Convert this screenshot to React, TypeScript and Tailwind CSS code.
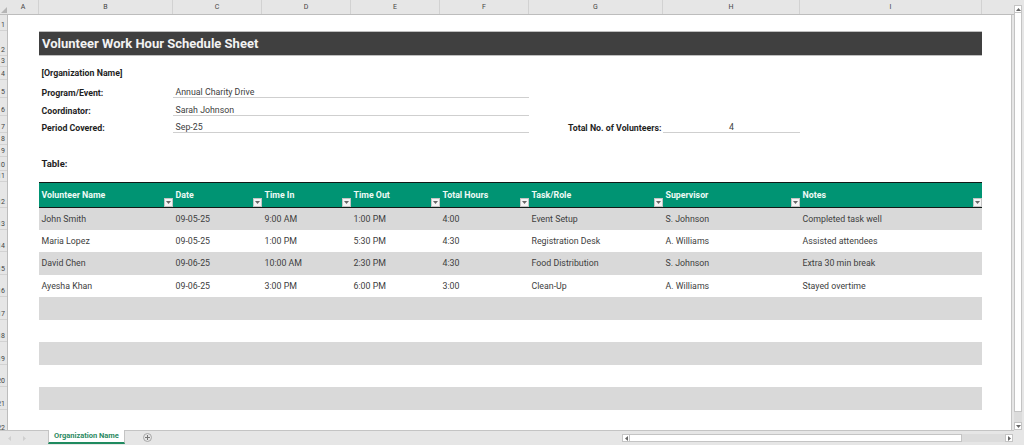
const COLS = "grid grid-cols-[31px_134px_89px_89px_89px_89px_134px_137px_182px_30px]";

const ROW_NUMS: [number, string][] = [
  [1, "h-[16px]"], [2, "h-[25px]"], [3, "h-[11px]"], [4, "h-[13px]"], [5, "h-[18px]"], [6, "h-[18px]"],
  [7, "h-[17px]"], [8, "h-[12px]"], [9, "h-[12px]"], [10, "h-[14px]"], [11, "h-[11px]"], [12, "h-[26px]"],
  [13, "h-[22px]"], [14, "h-[22px]"], [15, "h-[23px]"], [16, "h-[22px]"], [17, "h-[23px]"], [18, "h-[22px]"],
  [19, "h-[23px]"], [20, "h-[22px]"], [21, "h-[23px]"], [22, "h-[24px]"],
];

const COL_HEADS = ["A", "B", "C", "D", "E", "F", "G", "H", "I"];
const HEADERS = ["Volunteer Name", "Date", "Time In", "Time Out", "Total Hours", "Task/Role", "Supervisor", "Notes"];

const DATA: { cells: string[]; height: string; band: boolean }[] = [
  { cells: ["John Smith", "09-05-25", "9:00 AM", "1:00 PM", "4:00", "Event Setup", "S. Johnson", "Completed task well"], height: "h-[22px]", band: true },
  { cells: ["Maria Lopez", "09-05-25", "1:00 PM", "5:30 PM", "4:30", "Registration Desk", "A. Williams", "Assisted attendees"], height: "h-[22px]", band: false },
  { cells: ["David Chen", "09-06-25", "10:00 AM", "2:30 PM", "4:30", "Food Distribution", "S. Johnson", "Extra 30 min break"], height: "h-[23px]", band: true },
  { cells: ["Ayesha Khan", "09-06-25", "3:00 PM", "6:00 PM", "3:00", "Clean-Up", "A. Williams", "Stayed overtime"], height: "h-[22px]", band: false },
  { cells: ["", "", "", "", "", "", "", ""], height: "h-[23px]", band: true },
  { cells: ["", "", "", "", "", "", "", ""], height: "h-[22px]", band: false },
  { cells: ["", "", "", "", "", "", "", ""], height: "h-[23px]", band: true },
  { cells: ["", "", "", "", "", "", "", ""], height: "h-[22px]", band: false },
  { cells: ["", "", "", "", "", "", "", ""], height: "h-[23px]", band: true },
];

function FilterButton() {
  return (
    <span className="absolute right-0 bottom-0 flex h-[9px] w-[9px] items-center justify-center border border-[#c4c4c4] bg-[#f4f4f4]">
      <svg width="5" height="3" viewBox="0 0 5 3"><path d="M0 0h5L2.5 3z" fill="#666" /></svg>
    </span>
  );
}

function InfoRow({ height, label, value }: { height: string; label: string; value: string }) {
  return (
    <div className={`${COLS} ${height}`}>
      <div />
      <div className="flex items-end pl-[2.5px] font-bold text-[#1f1f1f]">{label}</div>
      <div className="col-span-4 flex items-end border-b border-[#cfcfcf] pl-[2.5px] text-[#404040]">{value}</div>
    </div>
  );
}

export default function App() {
  return (
    <div className="flex h-[445px] w-[1024px] overflow-hidden bg-[#e6e6e6] font-['Roboto',sans-serif] text-[9px] leading-none">
      <div className="flex w-[1014px] shrink-0 flex-col">
        {/* column letters */}
        <div className="flex h-[15px] shrink-0 border-b border-[#bdbdbd]">
          <div className="relative w-[8px]">
            <svg className="absolute right-[1px] bottom-[1px]" width="6" height="6" viewBox="0 0 6 6"><path d="M6 0v6H0z" fill="#b5b5b5" /></svg>
          </div>
          <div className={COLS}>
            {COL_HEADS.map((c) => (
              <div key={c} className="flex items-center justify-center border-r border-[#d2d2d2] text-[7px] text-[#444]">{c}</div>
            ))}
          </div>
        </div>

        <div className="flex h-[415px] shrink-0 overflow-hidden">
          {/* row numbers */}
          <div className="flex w-[8px] shrink-0 flex-col overflow-hidden border-r border-[#bdbdbd]">
            {ROW_NUMS.map(([n, h]) => (
              <div key={n} className={`${h} flex shrink-0 items-end justify-end overflow-hidden border-b border-[#d2d2d2] pr-[2px] pb-[1px] text-[7px] text-[#444]`}>
                {n}
              </div>
            ))}
          </div>

          {/* sheet */}
          <div className="flex w-[1004px] shrink-0 flex-col overflow-hidden border-r border-[#c4c4c4] bg-white text-[8.8px]">
            <div className="h-[16px] shrink-0" />
            <div className={`${COLS} h-[25px] shrink-0`}>
              <div />
              <div className="col-span-8 flex items-center border-y border-[#bfbfbf] bg-[#404040] pl-[3px] text-[13px] font-bold text-[#f2f2f2]">
                Volunteer Work Hour Schedule Sheet
              </div>
            </div>
            <div className="h-[11px] shrink-0" />
            <div className={`${COLS} h-[13px] shrink-0`}>
              <div />
              <div className="flex items-center whitespace-nowrap pl-[2.5px] font-bold text-[#1f1f1f]">[Organization Name]</div>
            </div>
            <InfoRow height="h-[18px] shrink-0" label="Program/Event:" value="Annual Charity Drive" />
            <InfoRow height="h-[18px] shrink-0" label="Coordinator:" value="Sarah Johnson" />
            <div className={`${COLS} h-[17px] shrink-0`}>
              <div />
              <div className="flex items-end pl-[2.5px] font-bold text-[#1f1f1f]">Period Covered:</div>
              <div className="col-span-4 flex items-end border-b border-[#cfcfcf] pl-[2.5px] text-[#404040]">Sep-25</div>
              <div className="flex items-end justify-end pr-[1.5px] font-bold text-[#1f1f1f]">Total No. of Volunteers:</div>
              <div className="flex items-end justify-center border-b border-[#cfcfcf] text-[#404040]">4</div>
            </div>
            <div className="h-[24px] shrink-0" />
            <div className={`${COLS} h-[14px] shrink-0`}>
              <div />
              <div className="flex items-center pl-[2.5px] text-[9.5px] font-bold text-[#1f1f1f]">Table:</div>
            </div>
            <div className="h-[11px] shrink-0" />

            {/* table header */}
            <div className={`${COLS} h-[26px] shrink-0`}>
              <div />
              {HEADERS.map((h) => (
                <div key={h} className="relative flex items-center border-y border-y-[#111a17] bg-[#009473] pl-[2.5px] font-bold text-[#eefaf6]">
                  {h}
                  <FilterButton />
                </div>
              ))}
            </div>

            {/* table rows */}
            {DATA.map((row, i) => (
              <div key={i} className={`${COLS} ${row.height} shrink-0`}>
                <div />
                {row.cells.map((c, j) => (
                  <div key={j} className={`flex items-center pl-[2.5px] whitespace-nowrap text-[#404040] ${row.band ? "bg-[#d9d9d9]" : ""}`}>
                    {c}
                  </div>
                ))}
              </div>
            ))}
          </div>
        </div>

        {/* tab bar */}
        <div className="flex h-[15px] shrink-0 items-start border-t border-[#c4c4c4]">
          <div className="flex w-[48px] items-center gap-[12px] pl-[8px] pt-[5px]">
            <svg width="3" height="5" viewBox="0 0 3 5"><path d="M3 0v5L0 2.5z" fill="#cfcfcf" /></svg>
            <svg width="3" height="5" viewBox="0 0 3 5"><path d="M0 0v5l3-2.5z" fill="#cfcfcf" /></svg>
          </div>
          <div className="-mt-[1px] flex h-[14px] w-[77px] items-center justify-center border-x border-b-2 border-x-[#c4c4c4] border-b-[#1f8a5f] bg-white text-[7.5px] font-bold text-[#2b8a63]">
            Organization Name
          </div>
          <div className="ml-[18px] mt-[2px] flex h-[9px] w-[9px] items-center justify-center rounded-full border border-[#a8a8a8]">
            <svg width="5" height="5" viewBox="0 0 5 5"><path d="M2 0h1v2h2v1H3v2H2V3H0V2h2z" fill="#777" /></svg>
          </div>
          <div className="ml-[470px] mt-[3px] flex h-[8px] w-[391px]">
            <div className="flex w-[8px] shrink-0 items-center justify-center border border-[#c4c4c4] bg-white">
              <svg width="3" height="5" viewBox="0 0 3 5"><path d="M3 0v5L0 2.5z" fill="#666" /></svg>
            </div>
            <div className="w-[332px] shrink-0 border-y border-r border-[#c4c4c4] bg-white" />
            <div className="flex-1 bg-[#dcdcdc]" />
            <div className="flex w-[8px] shrink-0 items-center justify-center border border-[#c4c4c4] bg-white">
              <svg width="3" height="5" viewBox="0 0 3 5"><path d="M0 0v5l3-2.5z" fill="#666" /></svg>
            </div>
          </div>
        </div>
      </div>

      {/* vertical scrollbar */}
      <div className="flex w-[10px] shrink-0 flex-col pt-[5px] pr-[2px]">
        <div className="flex h-[8px] shrink-0 items-center justify-center border border-[#c4c4c4] bg-white">
          <svg width="5" height="3" viewBox="0 0 5 3"><path d="M0 3h5L2.5 0z" fill="#666" /></svg>
        </div>
        <div className="h-[399px] shrink-0 border-x border-b border-[#c4c4c4] bg-white" />
        <div className="h-[10px] shrink-0 bg-[#dcdcdc]" />
        <div className="flex h-[8px] shrink-0 items-center justify-center border border-[#c4c4c4] bg-white">
          <svg width="5" height="3" viewBox="0 0 5 3"><path d="M0 0h5L2.5 3z" fill="#666" /></svg>
        </div>
      </div>
    </div>
  );
}
